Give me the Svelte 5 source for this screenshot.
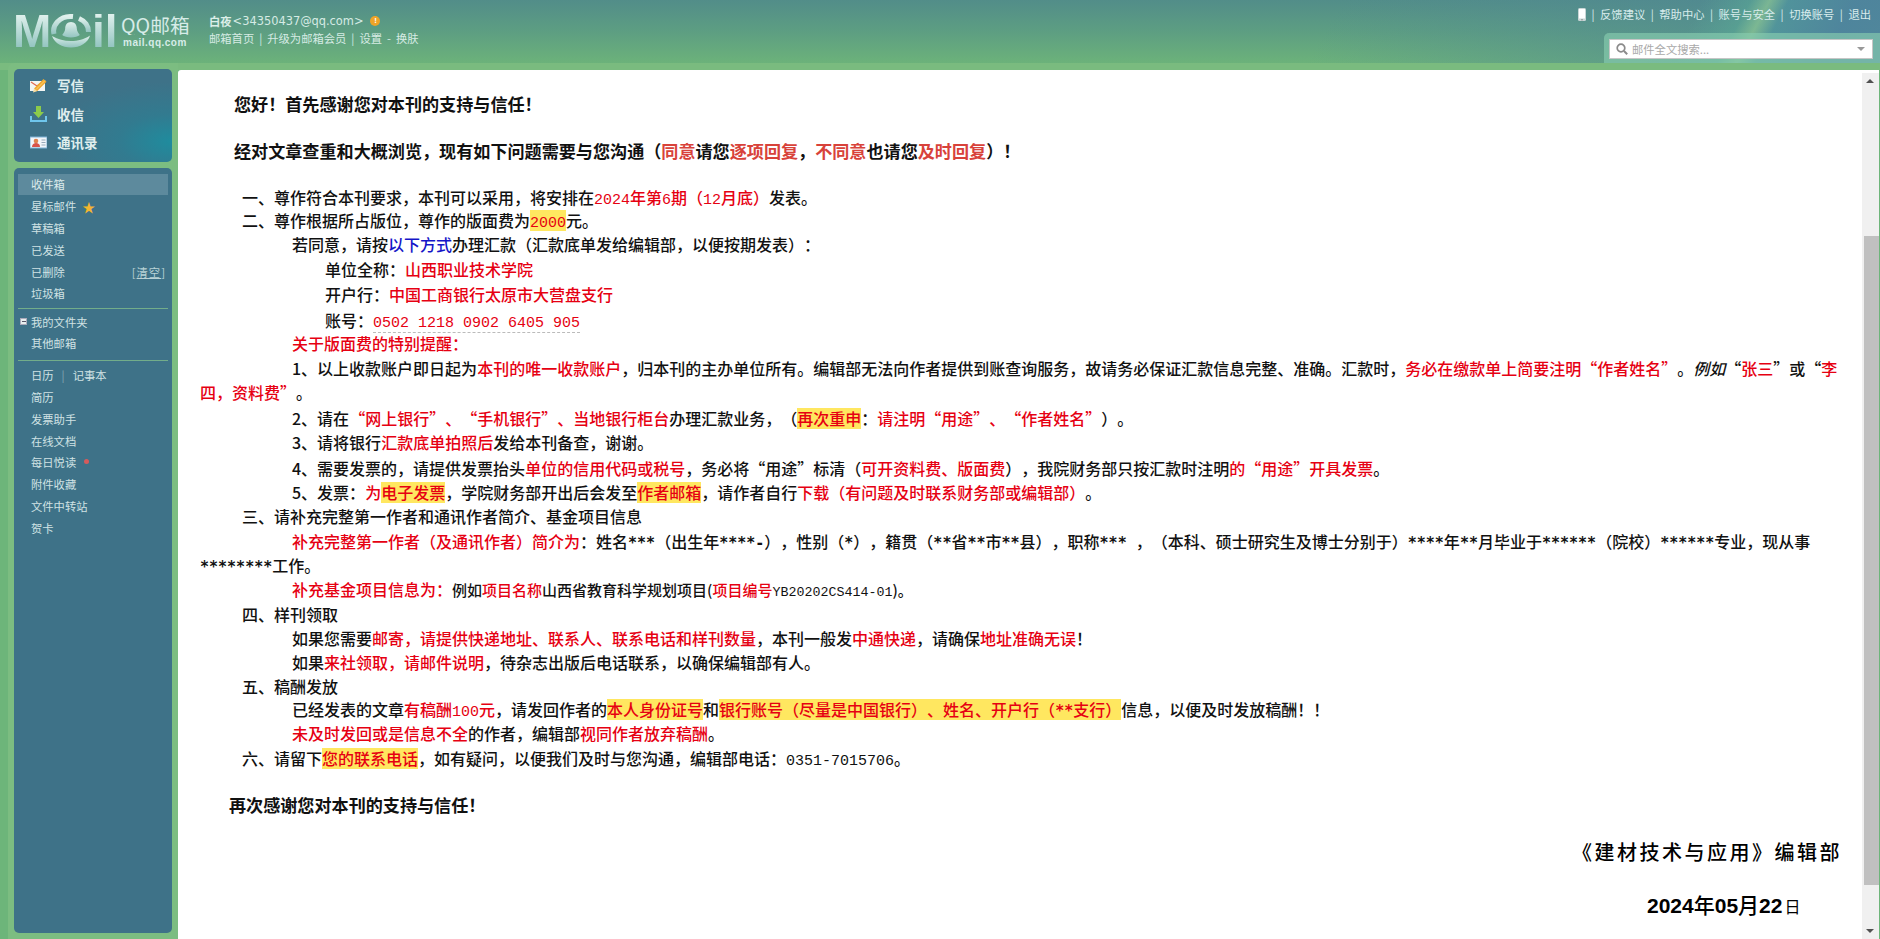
<script>
  const folders = [
    { t: '收件箱', on: true },
    { t: '星标邮件', star: true },
    { t: '草稿箱' },
    { t: '已发送' },
    { t: '已删除', clear: true },
    { t: '垃圾箱' }
  ];
  const tools = ['简历', '发票助手', '在线文档'];
  const tools2 = ['附件收藏', '文件中转站', '贺卡'];
  const links = ['反馈建议', '帮助中心', '账号与安全', '切换账号', '退出'];
</script>

<div class="page">
  <header class="top">
    <div class="logo">
      <div class="mark">
        <span class="ml em">M</span>
        <svg class="o" viewBox="0 0 42 34" width="42" height="34" preserveAspectRatio="none" aria-hidden="true">
          <defs>
            <linearGradient id="og" x1="0" y1="0" x2="0" y2="1"><stop offset="0" stop-color="#dff0ec"/><stop offset="1" stop-color="#93c4c0"/></linearGradient>
          </defs>
          <path d="M4 20A17 14.500 0 0 1 21 2.500a17 14 0 0 1 2 .1" fill="none" stroke="url(#og)" stroke-width="5"/>
          <path d="M29 4.500A17 14.500 0 0 1 38.500 18" fill="none" stroke="url(#og)" stroke-width="5"/>
          <path d="M2 22c6 3.500 12 5 19 5s13-1.500 19-5.500C38 29 30 33.500 21 33.500S5 29.500 2 22z" fill="url(#og)"/>
          <path d="M21 8c-3.600 0-5.800 2.800-5.800 6.500 0 3-2 4.800-3 6.500 1.500 1.500 5.300 2.500 8.800 2.500s7.300-1 8.800-2.500c-1-1.700-3-3.500-3-6.500C26.800 10.800 24.600 8 21 8z" fill="url(#og)"/>
        </svg>
        <span class="ml il">il</span>
      </div>
      <div class="brand">
        <div class="qq">QQ邮箱</div>
        <div class="dom">mail.qq.com</div>
      </div>
    </div>
    <div class="user">
      <div class="u1"><b>白夜</b><span class="addr">&lt;34350437@qq.com&gt;</span><i class="warn">!</i></div>
      <div class="u2">邮箱首页<s>|</s>升级为邮箱会员<s>|</s>设置<em>-</em>换肤</div>
    </div>
    <div class="right">
      <div class="links">
        <svg width="8" height="13" viewBox="0 0 8 13" aria-hidden="true"><rect width="8" height="13" rx="1.500" fill="#c9d6d6"/><rect x="1" y="1" width="6" height="9.500" fill="#fff"/><circle cx="4" cy="11.700" r=".8" fill="#888"/></svg>
        {#each links as l}<s>|</s><span>{l}</span>{/each}
      </div>
      <div class="searchwrap">
        <div class="search">
          <svg width="12" height="12" viewBox="0 0 12 12" aria-hidden="true"><circle cx="5" cy="5" r="3.800" fill="none" stroke="#8b8b8b" stroke-width="1.700"/><path d="M8 8l3.200 3.200" stroke="#8b8b8b" stroke-width="2"/></svg>
          <span class="ph">邮件全文搜索...</span>
          <i class="caret"></i>
        </div>
      </div>
    </div>
  </header>

  <div class="body">
    <aside class="rail">
      <nav class="p1">
        <div class="big">
          <svg width="17" height="15" viewBox="0 0 17 15" aria-hidden="true"><rect y="3" width="15" height="10" fill="#f3f6f4"/><path d="M1 4l6 4 4-3" fill="none" stroke="#e06a50" stroke-width="1.200"/><path d="M4 10.500L13.500 1 16.500 3.800 7 13.300z" fill="#f1a92f"/><path d="M4 10.500L7 13.300 3 14.500z" fill="#f7dca0"/><path d="M6 11.500L15 2.500" stroke="#fbd677" stroke-width="1"/></svg>
          <span>写信</span>
        </div>
        <div class="big">
          <svg width="17" height="16" viewBox="0 0 17 16" aria-hidden="true"><path d="M6 0h5v6h3l-5.500 6L3 6h3z" fill="#8ccb4a"/><path d="M1 10v5h15v-5" fill="none" stroke="#6fc6ec" stroke-width="2"/></svg>
          <span>收信</span>
        </div>
        <div class="big">
          <svg width="17" height="13" viewBox="0 0 17 13" aria-hidden="true"><rect width="17" height="11" y="1" fill="#f2f6fa" stroke="#7fb3d8"/><circle cx="6" cy="5" r="2.300" fill="#e0824f"/><path d="M2 11c0-3 2-4 4-4s4 1 4 4z" fill="#d8534a"/><path d="M11.500 4h4M11.500 6.500h4M11.500 9h4" stroke="#9ab" /></svg>
          <span>通讯录</span>
        </div>
      </nav>

      <nav class="p2">
        {#each folders as f}
          <div class="it" class:on={f.on}>
            <span>{f.t}</span>
            {#if f.star}<span class="star">★</span>{/if}
            {#if f.clear}<span class="clr">[<u>清空</u>]</span>{/if}
          </div>
        {/each}
        <hr class="a" />
        <div class="it"><i class="plus"></i><span>我的文件夹</span></div>
        <div class="it"><span>其他邮箱</span></div>
        <hr class="b" />
        <div class="it"><span>日历</span><s class="sep">|</s><span>记事本</span></div>
        {#each tools as t}<div class="it"><span>{t}</span></div>{/each}
        <div class="it"><span>每日悦读</span><i class="dot"></i></div>
        {#each tools2 as t}<div class="it"><span>{t}</span></div>{/each}
      </nav>
    </aside>

    <main class="view">
      <article class="mail">
        <h2 class="t1">您好！首先感谢您对本刊的支持与信任！</h2>
        <h2 class="t2">经对文章查重和大概浏览，现有如下问题需要与您沟通（<span class="sr">同意</span>请您<span class="sr">逐项回复</span>，<span class="sr">不同意</span>也请您<span class="sr">及时回复</span>）！</h2>

        <p class="l0 first">一、尊作符合本刊要求，本刊可以采用，将安排在<span class="r"><span class="m">2024</span>年第<span class="m">6</span>期（<span class="m">12</span>月底）</span>发表。</p>
        <p class="l0 dm">二、尊作根据所占版位，尊作的版面费为<span class="h r"><span class="m">2000</span></span>元。</p>
        <p class="l1">若同意，请按<span class="bl">以下方式</span>办理汇款（汇款底单发给编辑部，以便按期发表）：</p>
        <p class="l2 d1">单位全称：<span class="r">山西职业技术学院</span></p>
        <p class="l2 d1">开户行：<span class="r">中国工商银行太原市大营盘支行</span></p>
        <p class="l2 d2">账号：<span class="r m acct">0502 1218 0902 6405 905</span></p>
        <p class="l1 dm r">关于版面费的特别提醒：</p>
        <p class="l1 d1 wrap">1、以上收款账户即日起为<span class="r">本刊的唯一收款账户</span>，归本刊的主办单位所有。编辑部无法向作者提供到账查询服务，故请务必保证汇款信息完整、准确。汇款时，<span class="r">务必在缴款单上简要注明“作者姓名”</span>。<em class="ital">例如</em>“<span class="r">张三</span>”或“<span class="r">李<br />四，资料费”</span>。</p>
        <p class="l1 d2">2、请在<span class="r">“网上银行”、“手机银行”、当地银行柜台</span>办理汇款业务，（<span class="h r">再次重申</span>：<span class="r">请注明“用途”、“作者姓名”</span>）。</p>
        <p class="l1">3、请将银行<span class="r">汇款底单拍照后</span>发给本刊备查，谢谢。</p>
        <p class="l1 d2">4、需要发票的，请提供发票抬头<span class="r">单位的信用代码或税号</span>，务必将“用途”标清（<span class="r">可开资料费、版面费</span>），我院财务部只按汇款时注明<span class="r">的“用途”开具发票</span>。</p>
        <p class="l1">5、发票：<span class="r">为</span><span class="h r">电子发票</span>，学院财务部开出后会发至<span class="h r">作者邮箱</span>，请作者自行<span class="r">下载（有问题及时联系财务部或编辑部）</span>。</p>
        <p class="l0">三、请补充完整第一作者和通讯作者简介、基金项目信息</p>
        <p class="l1 d1 wrap"><span class="r">补充完整第一作者（及通讯作者）简介为</span>：姓名<span class="m2">***</span>（出生年<span class="m2">****-</span>），性别（<span class="m2">*</span>），籍贯（<span class="m2">**</span>省<span class="m2">**</span>市<span class="m2">**</span>县），职称<span class="m2">***&nbsp;</span>，（本科、硕士研究生及博士分别于）<span class="m2">****</span>年<span class="m2">**</span>月毕业于<span class="m2">******</span>（院校）<span class="m2">******</span>专业，现从事<br /><span class="m2">********</span>工作。</p>
        <p class="l1"><span class="r">补充基金项目信息为：</span><span class="small">例如<span class="r">项目名称</span>山西省教育科学规划项目(<span class="r">项目编号</span><span class="m3">YB20202CS414-01</span>)。</span></p>
        <p class="l0 d1">四、样刊领取</p>
        <p class="l1">如果您需要<span class="r">邮寄，请提供快递地址、联系人、联系电话和样刊数量</span>，本刊一般发<span class="r">中通快递</span>，请确保<span class="r">地址准确无误</span>！</p>
        <p class="l1">如果<span class="r">来社领取，请邮件说明</span>，待杂志出版后电话联系，以确保编辑部有人。</p>
        <p class="l0">五、稿酬发放</p>
        <p class="l1 dm">已经发表的文章<span class="r">有稿酬<span class="m">100</span>元</span>，请发回作者的<span class="h r">本人身份证号</span>和<span class="h r">银行账号（尽量是中国银行）、姓名、开户行（<span class="m2">**</span>支行）</span>信息，以便及时发放稿酬！！</p>
        <p class="l1"><span class="r">未及时发回或是信息不全</span>的作者，编辑部<span class="r">视同作者放弃稿酬</span>。</p>
        <p class="l0 d1">六、请留下<span class="h r">您的联系电话</span>，如有疑问，以便我们及时与您沟通，编辑部电话：<span class="m">0351-7015706</span>。</p>

        <h2 class="t3">再次感谢您对本刊的支持与信任！</h2>
        <div class="sign">《建材技术与应用》编辑部</div>
        <div class="date"><span>2024</span>年<span>05</span>月<span>22</span><small>日</small></div>
      </article>

      <div class="sb">
        <i class="up"></i>
        <div class="thumb"></div>
        <i class="down"></i>
      </div>
    </main>
  </div>
</div>

<style>
  :global(body) { margin: 0; background: #6db57a; }
  .page {
    width: 1880px; height: 939px; overflow: hidden; display: flex; flex-direction: column;
    font-family: "Noto Sans CJK SC", "Liberation Sans", sans-serif;
    background: #6db57a;
  }
  s { text-decoration: none; }

  /* header */
  .top {
    height: 63px; flex: none; display: flex; position: relative; color: #d6ebe4;
    font-size: 11.300px;
    background:
      linear-gradient(118deg, rgba(78,138,156,0) 89%, rgba(90,170,150,.55) 91.500%, rgba(150,210,150,.6) 92.500%, rgba(80,150,160,.7) 93.500%, rgba(78,132,158,.9) 97%, rgba(78,132,158,.8) 100%),
      linear-gradient(118deg, rgba(80,135,150,0) 70%, rgba(80,135,150,.55) 90%),
      linear-gradient(180deg, #528d89 0%, #5d9e82 50%, #6cb27a 100%);
  }
  .logo { display: flex; width: 209px; padding: 14px 0 0 13px; box-sizing: border-box; flex: none; }
  .mark { display: flex; align-items: center; height: 34px; width: 105px; flex: none; }
  .ml {
    font-family: "Liberation Sans", sans-serif; font-weight: 700; font-size: 46px; line-height: 34px;
    background: linear-gradient(180deg, #e0f1ed, #92c4c0);
    -webkit-background-clip: text; background-clip: text; color: transparent;
  }
  .em { width: 37px; flex: none; }
  .o { flex: none; }
  .il { flex: none; }
  .brand { margin-left: 3px; margin-top: 1px; display: flex; flex-direction: column; gap: 2px; }
  .qq { font-size: 19.700px; line-height: 20px; height: 20px; overflow: hidden; color: #d7ece8; white-space: nowrap; }
  .dom { font-size: 10px; line-height: 12px; font-weight: 700; letter-spacing: .5px; color: #d7ece8; font-family: "Liberation Sans", sans-serif; margin-left: 2px; white-space: nowrap; }
  .user { padding-top: 12px; flex: 1; line-height: 17px; }
  .u1 { display: flex; align-items: center; height: 18px; }
  .u1 b { font-weight: 700; color: #dcefe9; }
  .addr { font-family: "DejaVu Sans", sans-serif; font-size: 11.400px; margin-left: 1px; }
  .warn { width: 10px; height: 10px; border-radius: 50%; background: #f0a427; color: #fff; font: 700 8px/10px "Liberation Sans", sans-serif; text-align: center; margin-left: 7px; }
  .u2 s { margin: 0 5px; }
  .u2 em { font-style: normal; margin: 0 5px; }
  .right { width: 300px; flex: none; display: flex; flex-direction: column; align-items: flex-end; }
  .links { height: 28px; display: flex; align-items: center; padding-right: 9px; white-space: nowrap; color: #d8ecec; }
  .links s { margin: 0 5.500px; }
  .searchwrap { margin-top: 5px; width: 276px; height: 30px; box-sizing: border-box; padding: 5.500px 7px 0 5px; background: rgba(135,205,175,.65); border-radius: 5px 0 0 0; }
  .search { height: 18px; background: #fff; border: 1px solid #c6c6c6; display: flex; align-items: center; padding: 0 6px; }
  .ph { color: #a9a9a9; font-size: 11.300px; margin-left: 4px; flex: 1; }
  .caret { width: 0; height: 0; border: 4px solid transparent; border-top: 4px solid #999; border-bottom: 0; margin-right: 1px; }

  .body { flex: 1; display: flex; min-height: 0; padding-left: 8px; background: linear-gradient(180deg, #7abb7f 0, #7abb7f 7px, #6db57a 7px); }

  /* sidebar */
  .rail { width: 170px; flex: none; background: #7cbd81; border-radius: 6px 0 0 0; box-sizing: border-box; padding: 6px 6px 6px 6px; display: flex; flex-direction: column; gap: 6px; }
  .p1 {
    height: 93px; flex: none; border-radius: 5px; box-sizing: border-box; padding-top: 2px;
    background: radial-gradient(ellipse 120px 60px at 100% 78%, #1f8c9e 0%, rgba(40,130,150,.55) 45%, rgba(62,114,136,0) 100%), #3e7288;
  }
  .big { height: 28.500px; display: flex; align-items: center; padding-left: 16px; color: #dfeeee; font-size: 13.500px; font-weight: 700; }
  .big svg { width: 17px; flex: none; margin-right: 10px; }
  .p2 { flex: 1; background: #3e7288; border-radius: 5px; padding: 5.500px 4px 0; color: #d0e2e4; font-size: 11.300px; }
  .it { height: 21.800px; display: flex; align-items: center; padding-left: 13px; position: relative; white-space: nowrap; }
  .it.on { background: #5d8a9d; color: #dcebec; }
  .star { color: #f4b62f; font-size: 13px; margin-left: 6px; line-height: 1; }
  .clr { position: absolute; right: 2px; color: #b9d2d6; letter-spacing: 1px; }
  .sep { margin: 0 8px; color: #86a8b4; }
  .plus { position: absolute; left: 2px; width: 7px; height: 7px; background: #e8eeee; box-shadow: inset 0 0 0 1px #aab; }
  .plus::after { content: ''; position: absolute; left: 1.500px; top: 3px; width: 4px; height: 1px; background: #556; }
  .dot { width: 5px; height: 5px; border-radius: 50%; background: #d65b5b; margin-left: 8px; margin-top: -1px; }
  hr { border: 0; height: 1px; background: #72ad8a; }
  hr.a { margin: 3.500px 0 2px; }
  hr.b { margin: 6px 0 3px; }

  /* main */
  .view { flex: 1; background: #fff; display: flex; min-width: 0; margin: 7px 1px 0 0; border-radius: 3px 0 0 0; }
  .mail { flex: 1; min-width: 0; box-sizing: border-box; padding: 21px 20px 0 22px; color: #111; font-size: 16px; font-weight: 500; white-space: nowrap; overflow: hidden; text-spacing-trim: space-all; }
  h2 { margin: 0; font-size: 17.100px; line-height: 26px; font-weight: 700; color: #111; }
  .t1 { padding-left: 34px; }
  .t2 { padding-left: 34px; margin-top: 21px; }
  .t3 { padding-left: 29px; margin-top: 22px; }
  .sr { color: #d8423a; }
  p { margin: 0; line-height: 24px; }
  p span, p em { line-height: 1; }
  .first { margin-top: 21px; }
  .l0 { text-indent: 42px; }
  .l1 { text-indent: 92px; }
  .l2 { text-indent: 125px; }
  .d1 { margin-top: 1px; }
  .d2 { margin-top: 2px; }
  .dm { margin-top: -1px; }
  .r { color: #e60012; }
  .bl { color: #1515c8; }
  .h { background: linear-gradient(180deg, transparent 2px, #ffe760 2px, #ffe760 calc(100% - 1px), transparent calc(100% - 1px)); }
  .m { font-family: "Liberation Mono", monospace; font-size: 15px; }
  .m2 { font-family: "DejaVu Sans Mono", monospace; font-size: 15px; font-weight: 700; white-space: pre; }
  .m3 { font-family: "Liberation Mono", monospace; font-size: 13.330px; }
  .small { font-size: 15px; }
  .acct { border-bottom: 1px dashed #bbb; }
  .ital { font-style: italic; font-size: 16px; }
  .sign { text-align: right; font-size: 20px; letter-spacing: 2.500px; line-height: 30px; margin-top: 19px; color: #000; }
  .date { margin-top: 22px; padding-left: 1447px; font-size: 21px; line-height: 30px; color: #000; }
  .date span { font-family: "Liberation Sans", sans-serif; font-weight: 700; }
  .date small { font-size: 16px; font-weight: 400; margin-left: 2px; }

  .sb { width: 17px; flex: none; margin-top: 3px; background: #f0f0f0; position: relative; }
  .up, .down { position: absolute; left: 4px; width: 0; height: 0; border: 4px solid transparent; }
  .up { top: 6px; border-bottom: 4px solid #505050; border-top: 0; }
  .down { bottom: 6px; border-top: 4px solid #505050; border-bottom: 0; }
  .thumb { position: absolute; left: 2px; right: 0; top: 163px; height: 649px; background: #c0c0c0; }
</style>
